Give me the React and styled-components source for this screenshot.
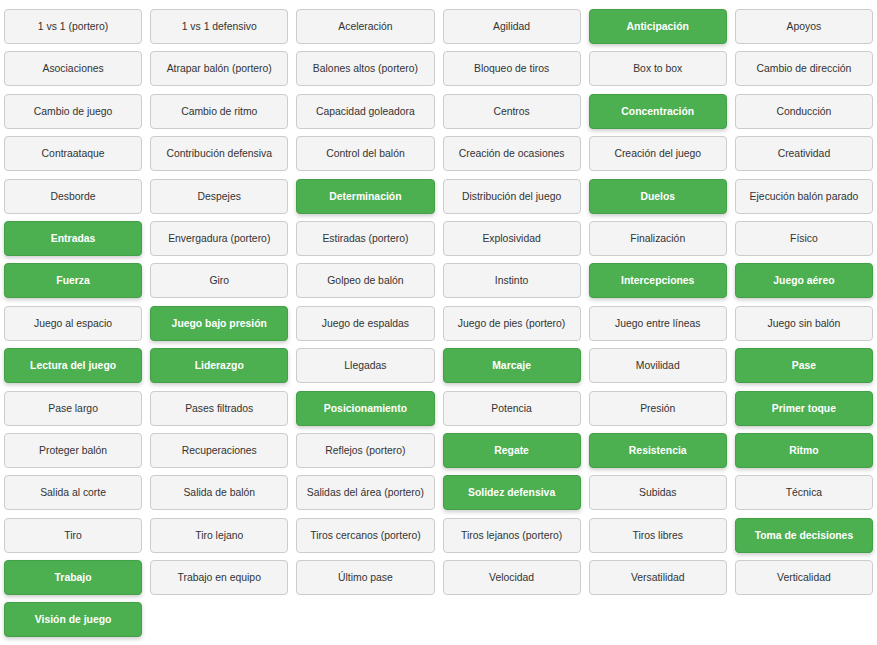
import React from 'react';
import styled, { createGlobalStyle } from 'styled-components';

const GlobalStyle = createGlobalStyle`
  body {
    margin: 0;
    background: #fff;
    font-family: "Liberation Sans", Arial, sans-serif;
  }
`;

const skills = [
  ['1 vs 1 (portero)', false], ['1 vs 1 defensivo', false], ['Aceleración', false], ['Agilidad', false], ['Anticipación', true], ['Apoyos', false],
  ['Asociaciones', false], ['Atrapar balón (portero)', false], ['Balones altos (portero)', false], ['Bloqueo de tiros', false], ['Box to box', false], ['Cambio de dirección', false],
  ['Cambio de juego', false], ['Cambio de ritmo', false], ['Capacidad goleadora', false], ['Centros', false], ['Concentración', true], ['Conducción', false],
  ['Contraataque', false], ['Contribución defensiva', false], ['Control del balón', false], ['Creación de ocasiones', false], ['Creación del juego', false], ['Creatividad', false],
  ['Desborde', false], ['Despejes', false], ['Determinación', true], ['Distribución del juego', false], ['Duelos', true], ['Ejecución balón parado', false],
  ['Entradas', true], ['Envergadura (portero)', false], ['Estiradas (portero)', false], ['Explosividad', false], ['Finalización', false], ['Físico', false],
  ['Fuerza', true], ['Giro', false], ['Golpeo de balón', false], ['Instinto', false], ['Intercepciones', true], ['Juego aéreo', true],
  ['Juego al espacio', false], ['Juego bajo presión', true], ['Juego de espaldas', false], ['Juego de pies (portero)', false], ['Juego entre líneas', false], ['Juego sin balón', false],
  ['Lectura del juego', true], ['Liderazgo', true], ['Llegadas', false], ['Marcaje', true], ['Movilidad', false], ['Pase', true],
  ['Pase largo', false], ['Pases filtrados', false], ['Posicionamiento', true], ['Potencia', false], ['Presión', false], ['Primer toque', true],
  ['Proteger balón', false], ['Recuperaciones', false], ['Reflejos (portero)', false], ['Regate', true], ['Resistencia', true], ['Ritmo', true],
  ['Salida al corte', false], ['Salida de balón', false], ['Salidas del área (portero)', false], ['Solidez defensiva', true], ['Subidas', false], ['Técnica', false],
  ['Tiro', false], ['Tiro lejano', false], ['Tiros cercanos (portero)', false], ['Tiros lejanos (portero)', false], ['Tiros libres', false], ['Toma de decisiones', true],
  ['Trabajo', true], ['Trabajo en equipo', false], ['Último pase', false], ['Velocidad', false], ['Versatilidad', false], ['Verticalidad', false],
  ['Visión de juego', true],
];

const Grid = styled.div`
  display: grid;
  grid-template-columns: repeat(6, minmax(0, 1fr));
  column-gap: 8px;
  row-gap: 7.4px;
  padding: 9px 4px 8px 4px;
`;

const SkillButton = styled.button`
  height: 35px;
  min-width: 0;
  box-sizing: border-box;
  display: flex;
  align-items: center;
  justify-content: center;
  padding: 0 4px;
  font-family: "Liberation Sans", Arial, sans-serif;
  font-size: 10.4px;
  border-radius: 4px;
  cursor: pointer;
  border: 1px solid ${p => (p.selected ? '#43a047' : '#cccccc')};
  background: ${p => (p.selected ? '#4caf50' : '#f4f4f4')};
  color: ${p => (p.selected ? '#ffffff' : '#333333')};
  font-weight: ${p => (p.selected ? 'bold' : 'normal')};
  box-shadow: ${p => (p.selected ? '0 2px 4px rgba(0,0,0,0.2)' : 'none')};
  white-space: nowrap;
  overflow: hidden;
`;

export default function App() {
  return (
    <>
      <GlobalStyle />
      <Grid>
        {skills.map(([name, selected]) => (
          <SkillButton key={name} selected={selected}>{name}</SkillButton>
        ))}
      </Grid>
    </>
  );
}
